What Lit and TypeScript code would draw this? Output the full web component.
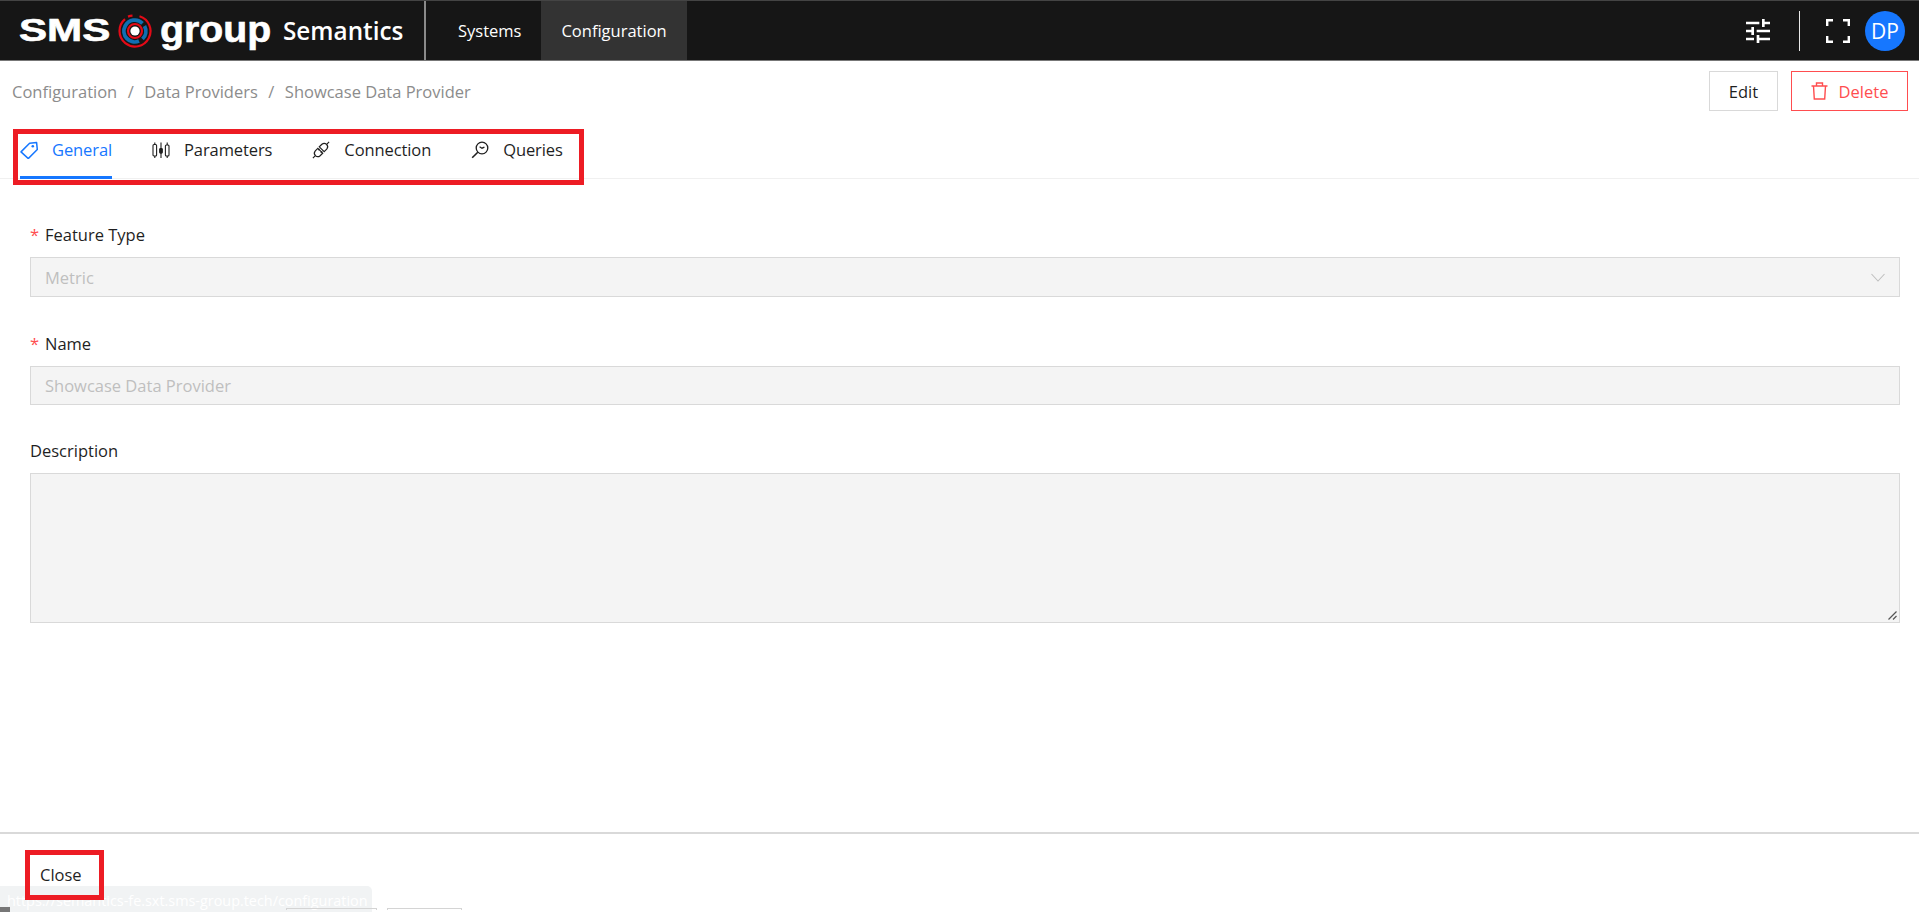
import { LitElement, html, css, svg } from 'lit';
import { customElement } from 'lit/decorators.js';

const tagIcon = svg`<path d="M9.6 2.2 16.6 1.6 17.3 8.4 8.3 17.6 1 10.9Z" fill="none" stroke="currentColor" stroke-width="1.5" stroke-linejoin="round"/><circle cx="12.8" cy="5.3" r="1.3" fill="currentColor"/>`;
const paramsIcon = svg`<g fill="none" stroke="currentColor" stroke-width="1.1"><rect x="1" y="3.5" width="3.6" height="11.5" rx="1"/><path d="M2.8 1.5V3.5M2.8 15v2M9 1.5v15.5M15.2 1.5v15.5"/><rect x="13.4" y="4" width="3.6" height="11" rx="1" fill="#fff"/><rect x="7.7" y="7.5" width="2.6" height="4.6" rx=".8" fill="currentColor"/></g>`;
const plugIcon = svg`<g fill="none" stroke="currentColor" stroke-width="1.2"><path d="M.9 17.1 3.3 14.7M17.1.9 14.7 3.3M5.8 7.3 3.3 9.9a3.4 3.4 0 0 0 4.8 4.8l2.6-2.5Z"/><path d="M12.2 10.7 14.7 8.1a3.4 3.4 0 0 0-4.8-4.8L7.3 5.8Z"/><path d="M6.2 9.2 7.6 7.8M8.8 11.8 10.2 10.4"/></g>`;
const queryIcon = svg`<g fill="none" stroke="currentColor" stroke-width="1.3"><circle cx="11" cy="7" r="5.8"/><path d="M6.8 11.2 1.2 16.8" stroke-width="1.6"/><path d="M8.6 5.8 11 7.2 13.4 6.2"/></g>`;

const tabs = [
  { label: 'General', icon: tagIcon, active: true },
  { label: 'Parameters', icon: paramsIcon, active: false },
  { label: 'Connection', icon: plugIcon, active: false },
  { label: 'Queries', icon: queryIcon, active: false },
];

@customElement('app-root')
export class AppRoot extends LitElement {
  static styles = css`
    :host {
      display: block;
      font-family: 'Open Sans', 'Noto Sans', sans-serif;
      font-size: 16.5px;
      color: #1f1f1f;
    }

    main {
      display: flex;
      flex-direction: column;
      height: 912px;
      overflow: hidden;
      position: relative;
      background: #fff;
    }

    header {
      align-items: stretch;
      background: #161616;
      border-bottom: 1px solid #777;
      border-top: 1px solid #444;
      box-sizing: border-box;
      color: #fff;
      display: flex;
      flex: none;
      height: 61px;
    }

    .brand {
      align-items: center;
      border-right: 2px solid #8a8a8a;
      display: flex;
      padding-left: 19px;
      width: 405px;
    }

    .word {
      display: inline-block;
      font-family: 'Liberation Sans', sans-serif;
      font-weight: 700;
      line-height: 1;
      transform-origin: left center;
      -webkit-text-stroke: 0.6px #fff;
    }

    .sms {
      font-size: 31px;
      transform: scaleX(1.36);
      width: 92px;
    }

    .mark {
      height: 34px;
      margin: 0 8px 0 7px;
      width: 34px;
    }

    .group {
      font-size: 36px;
      margin-top: -1px;
      transform: scaleX(1.09);
      width: 123px;
    }

    .product {
      font-size: 24.3px;
      font-weight: 600;
    }

    nav {
      display: flex;
      margin-left: 12px;
    }

    nav a {
      align-items: center;
      display: flex;
      padding: 0 20px;
    }

    nav a.active {
      background: #333;
    }

    .tools {
      align-items: center;
      display: flex;
      margin-left: auto;
      padding-right: 14px;
    }

    .tune {
      height: 24px;
      width: 24px;
    }

    .sep {
      background: #e8e8e8;
      height: 40px;
      margin: 0 26px 0 29px;
      width: 1px;
    }

    .full {
      height: 24px;
      margin-right: 15px;
      width: 24px;
    }

    .avatar {
      align-items: center;
      background: #1677ff;
      border-radius: 50%;
      display: flex;
      font-size: 21px;
      height: 40px;
      justify-content: center;
      width: 40px;
    }

    .bar {
      align-items: center;
      display: flex;
      flex: none;
      height: 50px;
      justify-content: space-between;
      padding: 10px 11px 0 12px;
      box-sizing: border-box;
    }

    .crumbs {
      color: #8c8c8c;
      display: flex;
      gap: 10.5px;
    }

    .actions {
      display: flex;
      gap: 13px;
    }

    button {
      align-items: center;
      background: #fff;
      border: 1.5px solid #d9d9d9;
      box-sizing: border-box;
      color: #1f1f1f;
      display: flex;
      font: inherit;
      height: 40px;
      justify-content: center;
      padding: 0;
    }

    .edit {
      width: 69px;
    }

    .delete {
      border-color: #ff4d4f;
      color: #ff4d4f;
      gap: 11px;
      width: 117px;
    }

    .delete svg {
      height: 18px;
      width: 17px;
    }

    .tabs {
      border-bottom: 1px solid #f0f0f0;
      display: flex;
      flex: none;
      gap: 40px;
      height: 68px;
      box-sizing: border-box;
      padding: 0 0 0 20px;
    }

    .tab {
      align-items: center;
      border-bottom: 3px solid transparent;
      box-sizing: border-box;
      display: flex;
      gap: 14px;
      height: 68px;
      letter-spacing: -0.1px;
      padding-top: 12px;
    }

    .tab.active {
      border-bottom-color: #1677ff;
      color: #1677ff;
    }

    .tab svg {
      height: 18px;
      width: 18px;
    }

    form {
      display: flex;
      flex: 1;
      flex-direction: column;
      padding: 44px 19px 0 30px;
    }

    label {
      display: block;
      line-height: 24px;
      margin-bottom: 10px;
    }

    label i {
      color: #ff4d4f;
      display: inline-block;
      font-style: normal;
      width: 15px;
    }

    .field {
      align-items: center;
      background: #f4f4f4;
      border: 1.5px solid #d9d9d9;
      box-sizing: border-box;
      color: #bfbfbf;
      display: flex;
      height: 40px;
      justify-content: space-between;
      margin-bottom: 35px;
      padding: 0 14px;
    }

    .name {
      height: 39px;
      margin-bottom: 34px;
    }

    .field svg {
      height: 9px;
      width: 14px;
    }

    .area {
      align-items: flex-end;
      height: 150px;
      justify-content: flex-end;
      padding: 0 2px 2px 0;
    }

    .area svg {
      height: 9px;
      width: 9px;
    }

    footer {
      align-items: center;
      border-top: 2px solid #d9d9d9;
      box-sizing: border-box;
      display: flex;
      flex: none;
      height: 80px;
      padding: 2px 0 0 40px;
    }

    .status {
      background: #f1f3f4;
      border-top-right-radius: 5px;
      bottom: 0;
      box-sizing: border-box;
      color: #fff;
      font-size: 14.4px;
      height: 26px;
      left: 0;
      line-height: 30px;
      padding-left: 7px;
      position: absolute;
      white-space: nowrap;
      width: 372px;
    }

    .chip {
      background: #777;
      bottom: 0;
      height: 5px;
      left: 0;
      position: absolute;
      width: 10px;
    }

    .edge {
      border: 1px solid #d4d4d4;
      border-bottom: none;
      bottom: 2px;
      box-sizing: border-box;
      height: 2px;
      position: absolute;
    }

    .edge-a {
      left: 286px;
      width: 91px;
    }

    .edge-b {
      left: 387px;
      width: 75px;
    }

    .mark-box {
      border: 5px solid #ed1c24;
      box-sizing: border-box;
      pointer-events: none;
      position: absolute;
    }

    .mark-tabs {
      height: 56px;
      left: 13px;
      top: 129px;
      width: 571px;
    }

    .mark-close {
      height: 50px;
      left: 25px;
      top: 850px;
      width: 79px;
    }
  `;

  renderTab(tab: (typeof tabs)[number]) {
    return html`<div class="tab ${tab.active ? 'active' : ''}">
      <svg viewBox="0 0 18 18">${tab.icon}</svg>
      <span>${tab.label}</span>
    </div>`;
  }

  render() {
    return html`
      <main>
        <header>
          <div class="brand">
            <span class="word sms">SMS</span>
            <svg class="mark" viewBox="0 0 34 34">
              <g fill="none">
                <path d="M21.5 2.2A15.5 15.5 0 1 1 7 5.2" stroke="#e30a17" stroke-width="2.2"/>
                <path d="M10 2.6A15.5 15.5 0 0 1 14.5 1.7" stroke="#e30a17" stroke-width="2.2"/>
                <path d="M21 27A10.8 10.8 0 0 1 7.2 12 10.8 10.8 0 0 1 24.5 9.3" stroke="#0f6fb3" stroke-width="3.8"/>
                <path d="M26.5 12A10.8 10.8 0 0 1 24.5 25" stroke="#0f6fb3" stroke-width="3.8"/>
                <circle cx="17" cy="17" r="7" stroke="#e30a17" stroke-width="2.2"/>
              </g>
              <circle cx="17" cy="17" r="4.6" fill="#fff"/>
            </svg>
            <span class="word group">group</span>
            <span class="product">Semantics</span>
          </div>
          <nav>
            <a>Systems</a>
            <a class="active">Configuration</a>
          </nav>
          <div class="tools">
            <svg class="tune" viewBox="3 3 18 18" fill="#fff">
              <path d="M3 17v2h6v-2H3zM3 5v2h10V5H3zm10 16v-2h8v-2h-8v-2h-2v6h2zM7 9v2H3v2h4v2h2V9H7zm14 4v-2H11v2h10zm-6-4h2V7h4V5h-4V3h-2v6z"/>
            </svg>
            <span class="sep"></span>
            <svg class="full" viewBox="0 0 24 24" fill="none" stroke="#fff" stroke-width="2.4">
              <path d="M1.2 7V1.2H7M17 1.2h5.8V7M22.8 17v5.8H17M7 22.8H1.2V17"/>
            </svg>
            <span class="avatar">DP</span>
          </div>
        </header>

        <div class="bar">
          <div class="crumbs">
            <span>Configuration</span><span>/</span>
            <span>Data Providers</span><span>/</span>
            <span>Showcase Data Provider</span>
          </div>
          <div class="actions">
            <button class="edit">Edit</button>
            <button class="delete">
              <svg viewBox="0 0 17 18" fill="none" stroke="currentColor" stroke-width="1.4">
                <path d="M.5 4h16M5.5 4V1h6v3M2.5 4l.8 13h10.4l.8-13"/>
              </svg>
              Delete
            </button>
          </div>
        </div>

        <div class="tabs">${tabs.map(tab => this.renderTab(tab))}</div>

        <form>
          <label><i>*</i>Feature Type</label>
          <div class="field">
            <span>Metric</span>
            <svg viewBox="0 0 14 9" fill="none" stroke="#bfbfbf" stroke-width="1.1"><path d="M.5 1 7 8l6.5-7"/></svg>
          </div>
          <label><i>*</i>Name</label>
          <div class="field name"><span>Showcase Data Provider</span></div>
          <label>Description</label>
          <div class="field area">
            <svg viewBox="0 0 9 9" stroke="#555" stroke-width="1.2"><path d="M.5 8.5 8.5.5M5 8.5 8.5 5"/></svg>
          </div>
        </form>

        <footer><span>Close</span></footer>

        <div class="status">https://semantics-fe.sxt.sms-group.tech/configuration</div>
        <div class="chip"></div>
        <div class="edge edge-a"></div>
        <div class="edge edge-b"></div>
        <div class="mark-box mark-tabs"></div>
        <div class="mark-box mark-close"></div>
      </main>
    `;
  }
}
